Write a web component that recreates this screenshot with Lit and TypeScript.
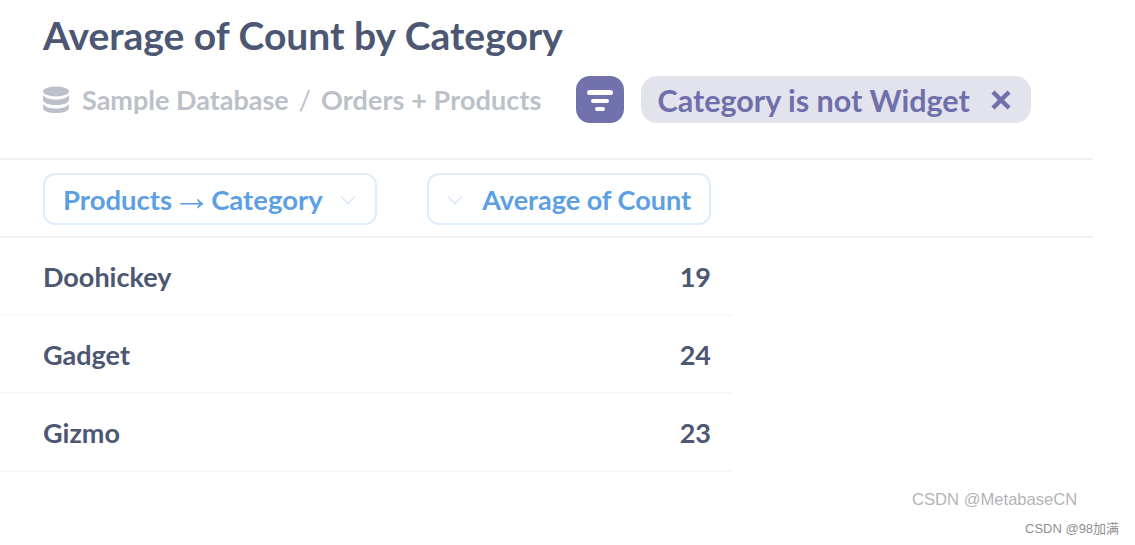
import { LitElement, css, html } from "lit";
import { customElement } from "lit/decorators.js";

const ROWS = [
  { name: "Doohickey", value: 19 },
  { name: "Gadget", value: 24 },
  { name: "Gizmo", value: 23 },
];

const chevron = html`<svg class="chevron" viewBox="0 0 16 10" width="16" height="10">
  <path d="M1 1.500 L8 8.500 L15 1.500" fill="none" stroke="currentColor" stroke-width="1.600" />
</svg>`;

@customElement("app-root")
export class AppRoot extends LitElement {
  static styles = css`
    :host {
      display: block;
      position: relative;
      width: 1135px;
      height: 545px;
      overflow: hidden;
      background: #fff;
      font-family: Lato, "Noto Sans", sans-serif;
    }
    .header {
      width: 1093px;
      height: 160px;
      padding: 11px 0 0 43px;
      box-sizing: border-box;
      border-bottom: 2px solid #f0f1f3;
    }
    h1 {
      margin: 0;
      height: 48px;
      font-size: 39px;
      line-height: 48px;
      font-weight: 700;
      color: #4c5773;
    }
    .meta {
      display: flex;
      align-items: center;
      margin-top: 17px;
      height: 47px;
    }
    .crumbs {
      display: flex;
      align-items: center;
      font-size: 27px;
      font-weight: 700;
      color: #bcc0c9;
    }
    .db {
      margin-right: 12px;
    }
    .sep {
      margin: 0 10px 0 10px;
      font-weight: 400;
    }
    .orders {
      letter-spacing: 0.1px;
    }
    .filter-icon {
      display: flex;
      align-items: center;
      justify-content: center;
      width: 48px;
      height: 47px;
      margin-left: 34px;
      border-radius: 14px;
      background: #7172ad;
    }
    .pill {
      display: flex;
      align-items: center;
      height: 47px;
      margin-left: 17px;
      padding: 0 19px 0 17px;
      border-radius: 16px;
      background: #e3e3ee;
      color: #6e6fab;
      font-size: 30.500px;
      font-weight: 700;
    }
    .pill svg {
      margin-left: 20px;
    }
    .table {
      width: 1093px;
    }
    .head {
      display: flex;
      align-items: center;
      height: 78px;
      box-sizing: border-box;
      padding: 1px 0 0 43px;
      border-bottom: 2px solid #f0f1f3;
    }
    .col {
      display: flex;
      align-items: center;
      height: 52px;
      box-sizing: border-box;
      border: 2px solid #dfecfa;
      border-radius: 12px;
      color: #5c9fe3;
      font-size: 27px;
      font-weight: 700;
    }
    .col.name {
      width: 334px;
      padding: 2px 19px 0 18px;
      font-size: 27.500px;
      justify-content: space-between;
    }
    .col.value {
      width: 284px;
      margin-left: 50px;
      padding: 2px 18px 0;
      justify-content: space-between;
    }
    .arrow {
      font-family: "Liberation Serif", serif;
      font-size: 39px;
      font-weight: 400;
      line-height: 0;
    }
    .chevron {
      color: #dce9f8;
    }
    .row {
      display: flex;
      align-items: center;
      justify-content: space-between;
      width: 732px;
      height: 78px;
      box-sizing: border-box;
      padding: 0 21px 0 43px;
      border-bottom: 2px solid #f7f8f9;
      color: #4c5773;
      font-size: 27px;
      font-weight: 700;
    }
    .mark {
      position: absolute;
      font-family: "Liberation Sans", "Noto Sans CJK SC", sans-serif;
      white-space: nowrap;
    }
    .mark.one {
      left: 912px;
      top: 490px;
      font-size: 16.600px;
      color: #b4b4b4;
    }
    .mark.two {
      left: 1025px;
      top: 518px;
      font-size: 13px;
      color: #8f8f8f;
    }
  `;

  render() {
    return html`
      <div class="header">
        <h1>Average of Count by Category</h1>
        <div class="meta">
          <div class="crumbs">
            <svg class="db" viewBox="0 0 27 27" width="27" height="27" fill="#bcc0c9">
              <ellipse cx="13" cy="5.500" rx="13" ry="5" />
              <path d="M0 9c2 3 7 4.500 13 4.500S24 12 26 9v5c0 3-6 5-13 5s-13-2-13-5z" />
              <path d="M0 18c2 3 7 4.500 13 4.500s11-1.500 13-4.500v4c0 3-6 5-13 5s-13-2-13-5z" />
            </svg>
            <span>Sample Database</span>
            <span class="sep">/</span>
            <span class="orders">Orders + Products</span>
          </div>
          <div class="filter-icon">
            <svg viewBox="0 0 26 24" width="26" height="24" fill="#fff">
              <rect x="0" y="2" width="26" height="5" rx="2.500" />
              <rect x="4" y="11" width="18" height="4" rx="2" />
              <rect x="8" y="19" width="10" height="4" rx="2" />
            </svg>
          </div>
          <div class="pill">
            <span>Category is not Widget</span>
            <svg viewBox="0 0 22 22" width="22" height="22">
              <path d="M3 3 L19 19 M19 3 L3 19" stroke="#6e6fab" stroke-width="4.500" />
            </svg>
          </div>
        </div>
      </div>
      <div class="table">
        <div class="head">
          <div class="col name">
            <span>Products<span class="arrow">→</span>Category</span>${chevron}
          </div>
          <div class="col value">${chevron}<span>Average of Count</span></div>
        </div>
        ${ROWS.map(
          (row) => html`
            <div class="row">
              <span>${row.name}</span>
              <span>${row.value}</span>
            </div>
          `
        )}
      </div>
      <div class="mark one">CSDN @MetabaseCN</div>
      <div class="mark two">CSDN @98加满</div>
    `;
  }
}
